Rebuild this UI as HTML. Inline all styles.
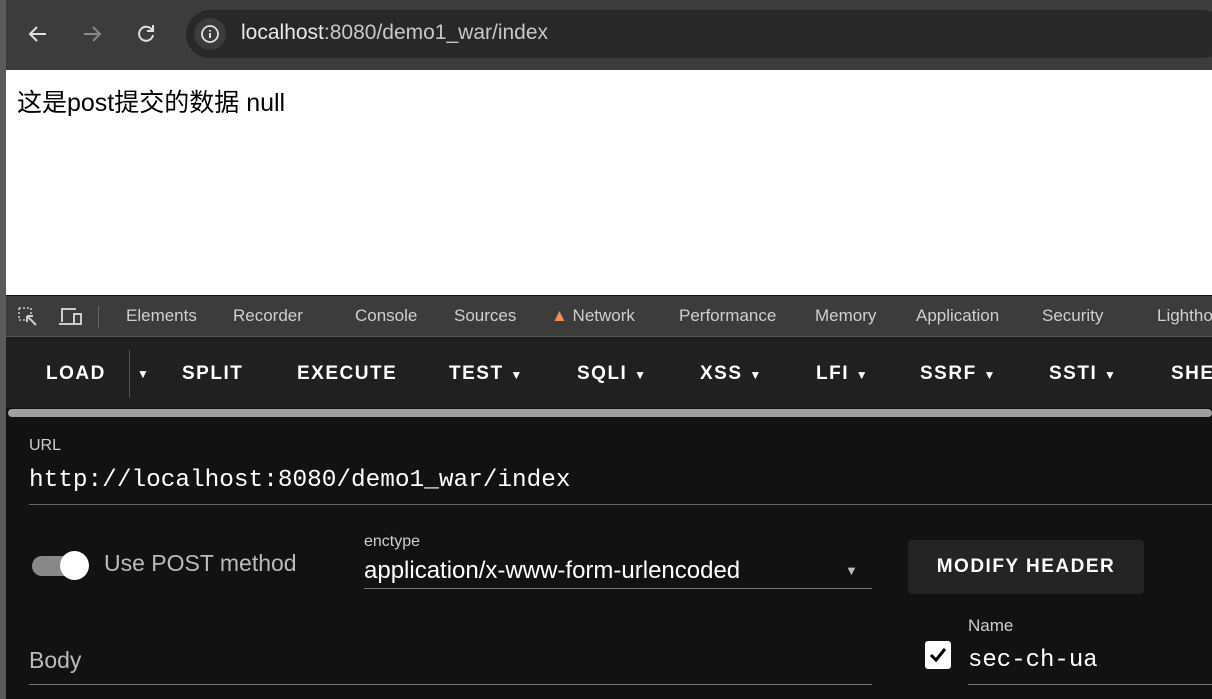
<!DOCTYPE html>
<html><head><meta charset="utf-8"><style>
*{margin:0;padding:0;box-sizing:border-box}
body{width:1212px;height:699px;overflow:hidden;background:#121212;font-family:"Liberation Sans","Noto Sans CJK SC",sans-serif;position:relative}
.abs{position:absolute}
.top{left:0;top:0;width:1212px;height:70px;background:#3c3c3c}
.strip{left:0;top:0;width:6px;height:699px;background:#5a5a5a}
.addr{left:186px;top:10px;width:1040px;height:48px;border-radius:24px;background:#282828}
.info{left:194px;top:18px;width:32px;height:32px;border-radius:16px;background:#3c3c3c}
.page{left:6px;top:70px;width:1206px;height:225px;background:#fff}
.tabs{left:6px;top:296px;width:1206px;height:41px;background:#3c3c3c;border-bottom:1px solid #555;color:#cfcfcf;font-size:17px}
.tabs span{position:absolute;top:10px}
.tb{left:6px;top:337px;width:1206px;height:71px;background:#202020;color:#fff;font-weight:bold;font-size:19px;letter-spacing:1.5px}
.tb span{position:absolute;top:26px}
.sb{left:8px;top:409px;width:1204px;height:8px;background:#a0a0a0;border-radius:4px}
.lbl{color:#cfcfcf;font-size:16px}
.mono{font-family:"Liberation Mono","DejaVu Sans Mono",monospace}
</style></head><body>
<div class="abs top"></div>
<div class="abs addr"></div>
<div class="abs info"></div>
<svg class="abs" style="left:26px;top:22px" width="24" height="24" viewBox="0 0 24 24"><path d="M20 12H5M11 5l-7 7 7 7" stroke="#e0e0e0" stroke-width="2" fill="none"/></svg>
<svg class="abs" style="left:80px;top:22px" width="24" height="24" viewBox="0 0 24 24"><path d="M4 12h15M13 5l7 7-7 7" stroke="#888" stroke-width="2" fill="none"/></svg>
<svg class="abs" style="left:134px;top:22px" width="24" height="24" viewBox="0 0 24 24"><path d="M18 8A7 7 0 1 0 19 13" stroke="#e0e0e0" stroke-width="2" fill="none"/><path d="M19 3v6h-6" stroke="#e0e0e0" stroke-width="2" fill="none"/></svg>
<svg class="abs" style="left:200px;top:24px" width="20" height="20" viewBox="0 0 20 20"><circle cx="10" cy="10" r="8" stroke="#e0e0e0" stroke-width="1.8" fill="none"/><path d="M10 9v5M10 6v1.5" stroke="#e0e0e0" stroke-width="2"/></svg>
<div class="abs" style="left:241px;top:21px;color:#e8e8e8;font-size:21px">localhost<span style="color:#c8c8c8">:8080/demo1_war/index</span></div>
<div class="abs page"></div>
<div class="abs strip"></div>
<div class="abs" style="left:17px;top:83px;font-size:25px;color:#000">这是post提交的数据 null</div>
<div class="abs tabs">
<svg class="abs" style="left:11px;top:10px" width="22" height="22" viewBox="0 0 22 22"><path d="M2 2h12v6M2 2v12h6" stroke="#ccc" stroke-width="1.5" stroke-dasharray="2 2" fill="none"/><path d="M10 10l9 9M10 10h6M10 10v6" stroke="#ccc" stroke-width="2" fill="none"/></svg>
<svg class="abs" style="left:52px;top:10px" width="26" height="22" viewBox="0 0 26 22"><path d="M4 16V3h14M1 18h14" stroke="#ccc" stroke-width="2" fill="none"/><rect x="16" y="8" width="7" height="10" stroke="#ccc" stroke-width="2" fill="none"/></svg>
<div class="abs" style="left:92px;top:10px;width:1px;height:22px;background:#666"></div>
<span style="left:120px">Elements</span><span style="left:227px">Recorder</span><span style="left:349px">Console</span><span style="left:448px">Sources</span>
<span style="left:545px"><span style="position:static;color:#f28b54">▲</span> Network</span><span style="left:673px">Performance</span><span style="left:809px">Memory</span><span style="left:910px">Application</span><span style="left:1036px">Security</span><span style="left:1151px">Lighthouse</span>
</div>
<div class="abs tb">
<span style="left:40px">LOAD</span>
<div class="abs" style="left:123px;top:13px;width:1px;height:48px;background:#555"></div>
<span style="left:131px;font-size:12px;top:30px">▼</span>
<span style="left:176px">SPLIT</span><span style="left:291px">EXECUTE</span><span style="left:443px">TEST <small style="font-size:12px">▼</small></span><span style="left:571px">SQLI <small style="font-size:12px">▼</small></span><span style="left:694px">XSS <small style="font-size:12px">▼</small></span><span style="left:810px">LFI <small style="font-size:12px">▼</small></span><span style="left:914px">SSRF <small style="font-size:12px">▼</small></span><span style="left:1043px">SSTI <small style="font-size:12px">▼</small></span><span style="left:1165px">SHELL</span>
</div>
<div class="abs sb"></div>
<div class="abs lbl" style="left:29px;top:437px">URL</div>
<div class="abs mono" style="left:29px;top:467px;font-size:24.4px;color:#fff">http://localhost:8080/demo1_war/index</div>
<div class="abs" style="left:29px;top:504px;width:1183px;height:1px;background:#666"></div>
<div class="abs" style="left:32px;top:556px;width:50px;height:20px;border-radius:10px;background:#888"></div>
<div class="abs" style="left:60px;top:551px;width:29px;height:29px;border-radius:15px;background:#fff"></div>
<div class="abs" style="left:104px;top:550px;font-size:23px;color:#bbb">Use POST method</div>
<div class="abs lbl" style="left:364px;top:533px">enctype</div>
<div class="abs" style="left:364px;top:557px;font-size:24px;color:#fff">application/x-www-form-urlencoded</div>
<div class="abs" style="left:845px;top:563px;font-size:13px;color:#bbb">▼</div>
<div class="abs" style="left:364px;top:588px;width:508px;height:1px;background:#777"></div>
<div class="abs" style="left:908px;top:540px;width:236px;height:54px;border-radius:4px;background:#242424;color:#fff;font-weight:bold;font-size:19px;letter-spacing:1.5px;text-align:center;line-height:54px">MODIFY HEADER</div>
<div class="abs" style="left:29px;top:647px;font-size:23px;color:#bbb">Body</div>
<div class="abs" style="left:29px;top:684px;width:843px;height:1px;background:#777"></div>
<div class="abs lbl" style="left:968px;top:616px;font-size:17px">Name</div>
<div class="abs" style="left:925px;top:641px;width:26px;height:28px;border-radius:3px;background:#fff"></div>
<svg class="abs" style="left:927px;top:644px" width="22" height="22" viewBox="0 0 22 22"><path d="M4 11l5 5 9-11" stroke="#000" stroke-width="3" fill="none"/></svg>
<div class="abs mono" style="left:968px;top:647px;font-size:24px;color:#fff">sec-ch-ua</div>
<div class="abs" style="left:968px;top:684px;width:244px;height:1px;background:#777"></div>
</body></html>
